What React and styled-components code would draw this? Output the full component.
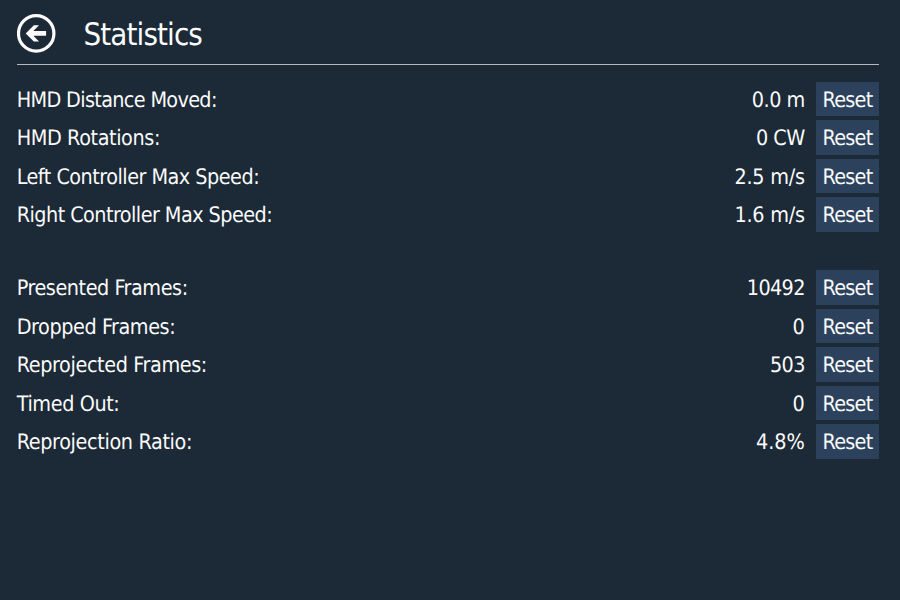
import React from 'react';
import styled, { createGlobalStyle } from 'styled-components';

const GlobalStyle = createGlobalStyle`
  * { box-sizing: border-box; }
  body { margin: 0; background: #1c2936; }
`;

const Page = styled.main`
  width: 900px;
  height: 600px;
  padding: 0 21px 0 17px;
  overflow: hidden;
  background: #1c2936;
  color: #fbfbfb;
  font-family: 'DejaVu Sans Condensed', 'DejaVu Sans', Tahoma, sans-serif;
  font-size: 21.4px;
  text-rendering: geometricPrecision;
`;

const Header = styled.header`
  display: flex;
  align-items: center;
  height: 65px;
  padding-top: 3px;
  border-bottom: 1px solid #b4b9bd;
`;

const BackButton = styled.button`
  display: flex;
  width: 39px;
  height: 39px;
  margin: 0 27.5px 0 0;
  padding: 0;
  border: 0;
  background: none;
  color: inherit;
`;

const Title = styled.h1`
  margin: 2px 0 0;
  font-size: 31px;
  font-weight: 400;
  line-height: 36px;
  letter-spacing: -0.9px;
`;

const Group = styled.section`
  display: grid;
  grid-auto-rows: 34.5px;
  row-gap: 4px;
  margin-top: ${({ $top }) => $top}px;
`;

const Row = styled.div`
  display: grid;
  grid-template-columns: 1fr auto 63px;
  align-items: center;
  white-space: nowrap;
`;

const Label = styled.span`
  margin-left: -0.3px;
  padding-top: 4.1px;
  line-height: 30.4px;
  letter-spacing: ${({ $tracking }) => $tracking}px;
`;

const Value = styled.span`
  margin-right: 11.2px;
  padding-top: 4.1px;
  line-height: 30.4px;
  letter-spacing: ${({ $tracking }) => $tracking}px;
`;

const ResetButton = styled.button`
  height: 34.5px;
  padding: 4.1px 0 0;
  border: 0;
  background: #2c425c;
  color: inherit;
  font: inherit;
  line-height: 30.4px;
  letter-spacing: -0.75px;
  text-rendering: inherit;
`;

const motion = [
  ['HMD Distance Moved:', -0.66, '0.0 m', -0.5],
  ['HMD Rotations:', -0.4, '0 CW', -0.5],
  ['Left Controller Max Speed:', -0.51, '2.5 m/s', -0.22],
  ['Right Controller Max Speed:', -0.55, '1.6 m/s', -0.22],
];

const frames = [
  ['Presented Frames:', -0.45, '10492', -0.65],
  ['Dropped Frames:', -0.43, '0', 0],
  ['Reprojected Frames:', -0.38, '503', -0.6],
  ['Timed Out:', -0.4, '0', 0],
  ['Reprojection Ratio:', -0.36, '4.8%', 0],
];

function StatGroup({ rows, top }) {
  return (
    <Group $top={top}>
      {rows.map(([label, labelTracking, value, valueTracking]) => (
        <Row key={label}>
          <Label $tracking={labelTracking}>{label}</Label>
          <Value $tracking={valueTracking}>{value}</Value>
          <ResetButton>Reset</ResetButton>
        </Row>
      ))}
    </Group>
  );
}

export default function App() {
  return (
    <Page>
      <GlobalStyle />
      <Header>
        <BackButton aria-label="Back">
          <svg width="39" height="39" viewBox="0 0 39 39">
            <circle cx="19.2" cy="19.4" r="17.7" fill="none" stroke="currentColor" strokeWidth="3.2" />
            <path d="M8.7 19.4 16.8 11.2h5.2L16.4 17.1h12.7v4.6H16.4l5.6 5.9h-5.2Z" fill="currentColor" />
          </svg>
        </BackButton>
        <Title>Statistics</Title>
      </Header>
      <StatGroup rows={motion} top={16.7} />
      <StatGroup rows={frames} top={38.5} />
    </Page>
  );
}
